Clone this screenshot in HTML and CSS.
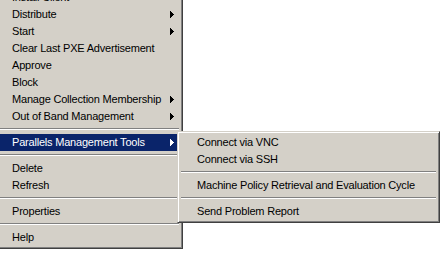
FILE: index.html
```html
<!DOCTYPE html>
<html lang="en">

<head>
    <meta charset="UTF-8">
    <meta name="viewport" content="width=device-width, initial-scale=1.0">
    <title>Context Menu</title>
    <link rel="stylesheet" href="styles.css">
</head>

<body>
    <!-- Main context menu -->
    <div class="menu main-menu">
        <div class="item">Install Client</div>
        <div class="item">Distribute<svg class="arrow" viewBox="0 0 4 7"><path d="M0 0h1v7h-1zM1 1h1v5h-1zM2 2h1v3h-1zM3 3h1v1h-1z"/></svg></div>
        <div class="item">Start<svg class="arrow" viewBox="0 0 4 7"><path d="M0 0h1v7h-1zM1 1h1v5h-1zM2 2h1v3h-1zM3 3h1v1h-1z"/></svg></div>
        <div class="item">Clear Last PXE Advertisement</div>
        <div class="item">Approve</div>
        <div class="item">Block</div>
        <div class="item">Manage Collection Membership<svg class="arrow" viewBox="0 0 4 7"><path d="M0 0h1v7h-1zM1 1h1v5h-1zM2 2h1v3h-1zM3 3h1v1h-1z"/></svg></div>
        <div class="item">Out of Band Management<svg class="arrow" viewBox="0 0 4 7"><path d="M0 0h1v7h-1zM1 1h1v5h-1zM2 2h1v3h-1zM3 3h1v1h-1z"/></svg></div>
        <div class="sep"></div>
        <div class="item active">Parallels Management Tools<svg class="arrow" viewBox="0 0 4 7"><path d="M0 0h1v7h-1zM1 1h1v5h-1zM2 2h1v3h-1zM3 3h1v1h-1z"/></svg></div>
        <div class="sep"></div>
        <div class="item">Delete</div>
        <div class="item">Refresh</div>
        <div class="sep"></div>
        <div class="item">Properties</div>
        <div class="sep"></div>
        <div class="item">Help</div>
    </div>

    <!-- Submenu for Parallels Management Tools -->
    <div class="menu sub-menu">
        <div class="item">Connect via VNC</div>
        <div class="item">Connect via SSH</div>
        <div class="sep"></div>
        <div class="item">Machine Policy Retrieval and Evaluation Cycle</div>
        <div class="sep"></div>
        <div class="item">Send Problem Report</div>
    </div>
</body>

</html>
```

FILE: styles.css
```css
/* Page: plain white desktop behind the popups */
body {
    margin: 0;
    background-color: #fff;
    font-family: Tahoma, "Liberation Sans", sans-serif;
    font-size: 11px;
    letter-spacing: -0.2px;
    color: #000;
    overflow: hidden;
}

/* Classic 3D popup menu frame */
.menu {
    position: absolute;
    box-sizing: border-box;
    background-color: #d4d0c8;
    border: 1px solid;
    border-color: #d4d0c8 #404040 #404040 #d4d0c8;
    box-shadow: inset 1px 1px #fff, inset -1px -1px #808080;
    padding: 2px;
}

.main-menu {
    left: -8px;
    top: -14px;
    width: 191px;
}

.sub-menu {
    left: 177px;
    top: 131px;
    width: 263px;
}

/* Menu rows */
.item {
    display: flex;
    justify-content: space-between;
    align-items: center;
    height: 17px;
    line-height: 17px;
    padding: 0 6px 0 17px;
    white-space: nowrap;
}

.item.active {
    background-color: #0a246a;
    color: #fff;
}

/* Submenu arrow */
.arrow {
    width: 4px;
    height: 7px;
    fill: currentColor;
    shape-rendering: crispEdges;
}

/* Etched separator line */
.sep {
    height: 0;
    margin: 3px 1px 4px;
    border-top: 1px solid #808080;
    border-bottom: 1px solid #fff;
}
```
